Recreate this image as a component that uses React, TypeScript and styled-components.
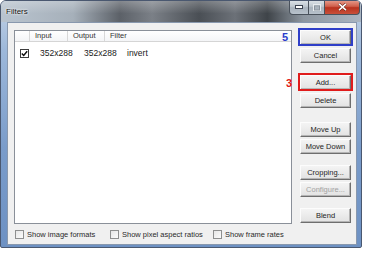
import React from "react";
import styled, { createGlobalStyle } from "styled-components";

const Global = createGlobalStyle`
  html, body { margin: 0; padding: 0; background: #ffffff; }
  body { font-family: "Liberation Sans", Arial, sans-serif; font-size: 7.5px; color: #1e1e1e; }
  * { box-sizing: border-box; }
`;

const Window = styled.div`
  width: 362px;
  height: 248px;
  display: flex;
  flex-direction: column;
  border: 1px solid #4a5870;
  border-radius: 6px 6px 2px 2px;
  overflow: hidden;
  background: linear-gradient(180deg, #c4d3e6 0%, #9db8da 20%, #7a9cca 60%, #6d91c3 100%);
`;

const TitleBar = styled.div`
  height: 21px;
  display: flex;
  align-items: flex-start;
  justify-content: space-between;
  background:
    linear-gradient(180deg, rgba(255,255,255,0.25) 0%, rgba(255,255,255,0) 60%),
    linear-gradient(90deg, #b9c4cf 0%, #a6b0ba 20%, #5c6168 33%, #7b8087 42%, #4a4f55 55%, #6c7178 65%, #3f4449 74%, #8d96a0 84%, #aab5c1 100%);
`;

const Title = styled.span`
  padding: 6px 0 0 5px;
  font-size: 8px;
  color: #111;
  text-shadow: 0 0 3px #fff, 0 0 2px #fff;
`;

const Controls = styled.div`
  display: flex;
  margin-right: 1px;
  margin-top: -1px;
`;

const CtrlButton = styled.div<{ $w: number; $close?: boolean }>`
  width: ${(p) => p.$w}px;
  height: 15px;
  display: flex;
  align-items: center;
  justify-content: center;
  border: 1px solid #4a525c;
  border-top: none;
  margin-left: -1px;
  background: ${(p) =>
    p.$close
      ? "linear-gradient(180deg, #e8a090 0%, #d0604c 45%, #b8321e 55%, #c8503a 100%)"
      : "linear-gradient(180deg, #dfe5ea 0%, #bfc8d0 45%, #a8b2bc 55%, #b8c2cc 100%)"};
  &:first-child { border-bottom-left-radius: 4px; }
  &:last-child { border-bottom-right-radius: 4px; }
`;

const Client = styled.div`
  flex: 1;
  margin: 0 4px 2px 6px;
  background: #f0f0f0;
  border: 1px solid #8898ae;
  padding: 7px 5px 0 6px;
  display: flex;
  flex-direction: column;
`;

const MainRow = styled.div`
  display: flex;
  gap: 8px;
  height: 194px;
`;

const List = styled.div`
  width: 278px;
  border: 1px solid #8a9099;
  background: #fff;
  display: flex;
  flex-direction: column;
`;

const Header = styled.div`
  display: flex;
  height: 11px;
  border-bottom: 1px solid #d5d5d5;
  background: linear-gradient(180deg, #ffffff 0%, #f4f5f7 100%);
`;

const HeaderCell = styled.div<{ $w?: number }>`
  ${(p) => (p.$w ? `width: ${p.$w}px;` : "flex: 1;")}
  border-right: 1px solid #d8d8d8;
  padding-left: 5px;
  line-height: 10px;
  color: #333333;
  &:last-child { border-right: none; }
`;

const Row = styled.div`
  display: flex;
  align-items: center;
  height: 14px;
  margin-top: 4px;
`;

const Cell = styled.div<{ $w?: number }>`
  ${(p) => (p.$w ? `width: ${p.$w}px;` : "flex: 1;")}
  font-size: 8.5px;
  color: #1a1a1a;
`;

const CheckCell = styled.div`
  width: 25px;
  padding-left: 5px;
  display: flex;
  align-items: center;
`;

const ListCheck = styled.div`
  width: 9px;
  height: 9px;
  border: 1px solid #3c3c3c;
  background: #fff;
  display: flex;
  align-items: center;
  justify-content: center;
`;

const ButtonColumn = styled.div`
  width: 51px;
  display: flex;
  flex-direction: column;
`;

const ButtonSlot = styled.div<{ $space: number }>`
  position: relative;
  margin-top: ${(p) => p.$space}px;
`;

const Button = styled.div<{ $disabled?: boolean }>`
  height: 15px;
  display: flex;
  align-items: center;
  justify-content: center;
  background: linear-gradient(180deg, #f4f4f4 0%, #ebebeb 50%, #e2e2e2 100%);
  border-style: solid;
  border-width: 1px;
  border-color: #fcfcfc #6e6e6e #6e6e6e #fcfcfc;
  box-shadow: inset -1px -1px 0 #b4b4b4;
  color: ${(p) => (p.$disabled ? "#a2a2a2" : "#1e1e1e")};
  font-size: 7.5px;
`;

const Highlight = styled.span<{ $color: string }>`
  position: absolute;
  inset: -2px -2px -1px -2px;
  border: 2px solid ${(p) => p.$color};
  pointer-events: none;
`;

const Marker = styled.span<{ $color: string; $left: number; $top: number }>`
  position: absolute;
  left: ${(p) => p.$left}px;
  top: ${(p) => p.$top}px;
  font-size: 11px;
  font-weight: bold;
  line-height: 11px;
  color: ${(p) => p.$color};
`;

const OptionsRow = styled.div`
  display: flex;
  align-items: center;
  margin-top: 5px;
  height: 10px;
  padding-left: 1px;
`;

const Option = styled.label<{ $w: number }>`
  width: ${(p) => p.$w}px;
  display: flex;
  align-items: center;
  gap: 3px;
  color: #2a2a2a;
`;

const Box = styled.span`
  width: 9px;
  height: 9px;
  border: 1px solid #8e8f8f;
  background: linear-gradient(135deg, #e6e6e6 0%, #fbfbfb 100%);
`;

const buttons: { label: string; space: number; disabled?: boolean; mark?: "5" | "3" }[] = [
  { label: "OK", space: 0, mark: "5" },
  { label: "Cancel", space: 3 },
  { label: "Add...", space: 12, mark: "3" },
  { label: "Delete", space: 3 },
  { label: "Move Up", space: 14 },
  { label: "Move Down", space: 2 },
  { label: "Cropping...", space: 11 },
  { label: "Configure...", space: 2, disabled: true },
  { label: "Blend", space: 11 },
];

export default function App() {
  return (
    <>
      <Global />
      <Window>
        <TitleBar>
          <Title>Filters</Title>
          <Controls>
            <CtrlButton $w={20}>
              <svg width="8" height="4" viewBox="0 0 8 4">
                <rect x="0.5" y="0.5" width="7" height="3" fill="#fff" stroke="#3a4250" strokeWidth="1" />
              </svg>
            </CtrlButton>
            <CtrlButton $w={17}>
              <svg width="8" height="7" viewBox="0 0 8 7">
                <rect x="0.5" y="0.5" width="7" height="6" fill="none" stroke="#e8ecf0" strokeWidth="1" />
                <rect x="1.5" y="2" width="5" height="4" fill="none" stroke="#8a949e" strokeWidth="1" />
              </svg>
            </CtrlButton>
            <CtrlButton $w={36} $close>
              <svg width="9" height="8" viewBox="0 0 9 8">
                <path d="M1 0.8 L8 7.2 M8 0.8 L1 7.2" stroke="#5a1a10" strokeWidth="2.6" />
                <path d="M1 0.8 L8 7.2 M8 0.8 L1 7.2" stroke="#ffffff" strokeWidth="1.6" />
              </svg>
            </CtrlButton>
          </Controls>
        </TitleBar>
        <Client>
          <MainRow>
            <List>
              <Header>
                <HeaderCell $w={15} />
                <HeaderCell $w={38}>Input</HeaderCell>
                <HeaderCell $w={37}>Output</HeaderCell>
                <HeaderCell>Filter</HeaderCell>
              </Header>
              <Row>
                <CheckCell>
                  <ListCheck>
                    <svg width="7" height="7" viewBox="0 0 7 7">
                      <path d="M0.8 3.4 L2.7 5.4 L6.2 1.2" fill="none" stroke="#111" strokeWidth="1.5" />
                    </svg>
                  </ListCheck>
                </CheckCell>
                <Cell $w={44}>352x288</Cell>
                <Cell $w={43}>352x288</Cell>
                <Cell>invert</Cell>
              </Row>
            </List>
            <ButtonColumn>
              {buttons.map((b) => (
                <ButtonSlot key={b.label} $space={b.space}>
                  <Button $disabled={b.disabled}>{b.label}</Button>
                  {b.mark === "5" && (
                    <>
                      <Highlight $color="#2f3fc8" />
                      <Marker $color="#2a3ccc" $left={-18} $top={2}>5</Marker>
                    </>
                  )}
                  {b.mark === "3" && (
                    <>
                      <Highlight $color="#e01c1c" />
                      <Marker $color="#e01414" $left={-14} $top={3}>3</Marker>
                    </>
                  )}
                </ButtonSlot>
              ))}
            </ButtonColumn>
          </MainRow>
          <OptionsRow>
            <Option $w={95}>
              <Box />
              Show image formats
            </Option>
            <Option $w={103}>
              <Box />
              Show pixel aspect ratios
            </Option>
            <Option $w={80}>
              <Box />
              Show frame rates
            </Option>
          </OptionsRow>
        </Client>
      </Window>
    </>
  );
}
